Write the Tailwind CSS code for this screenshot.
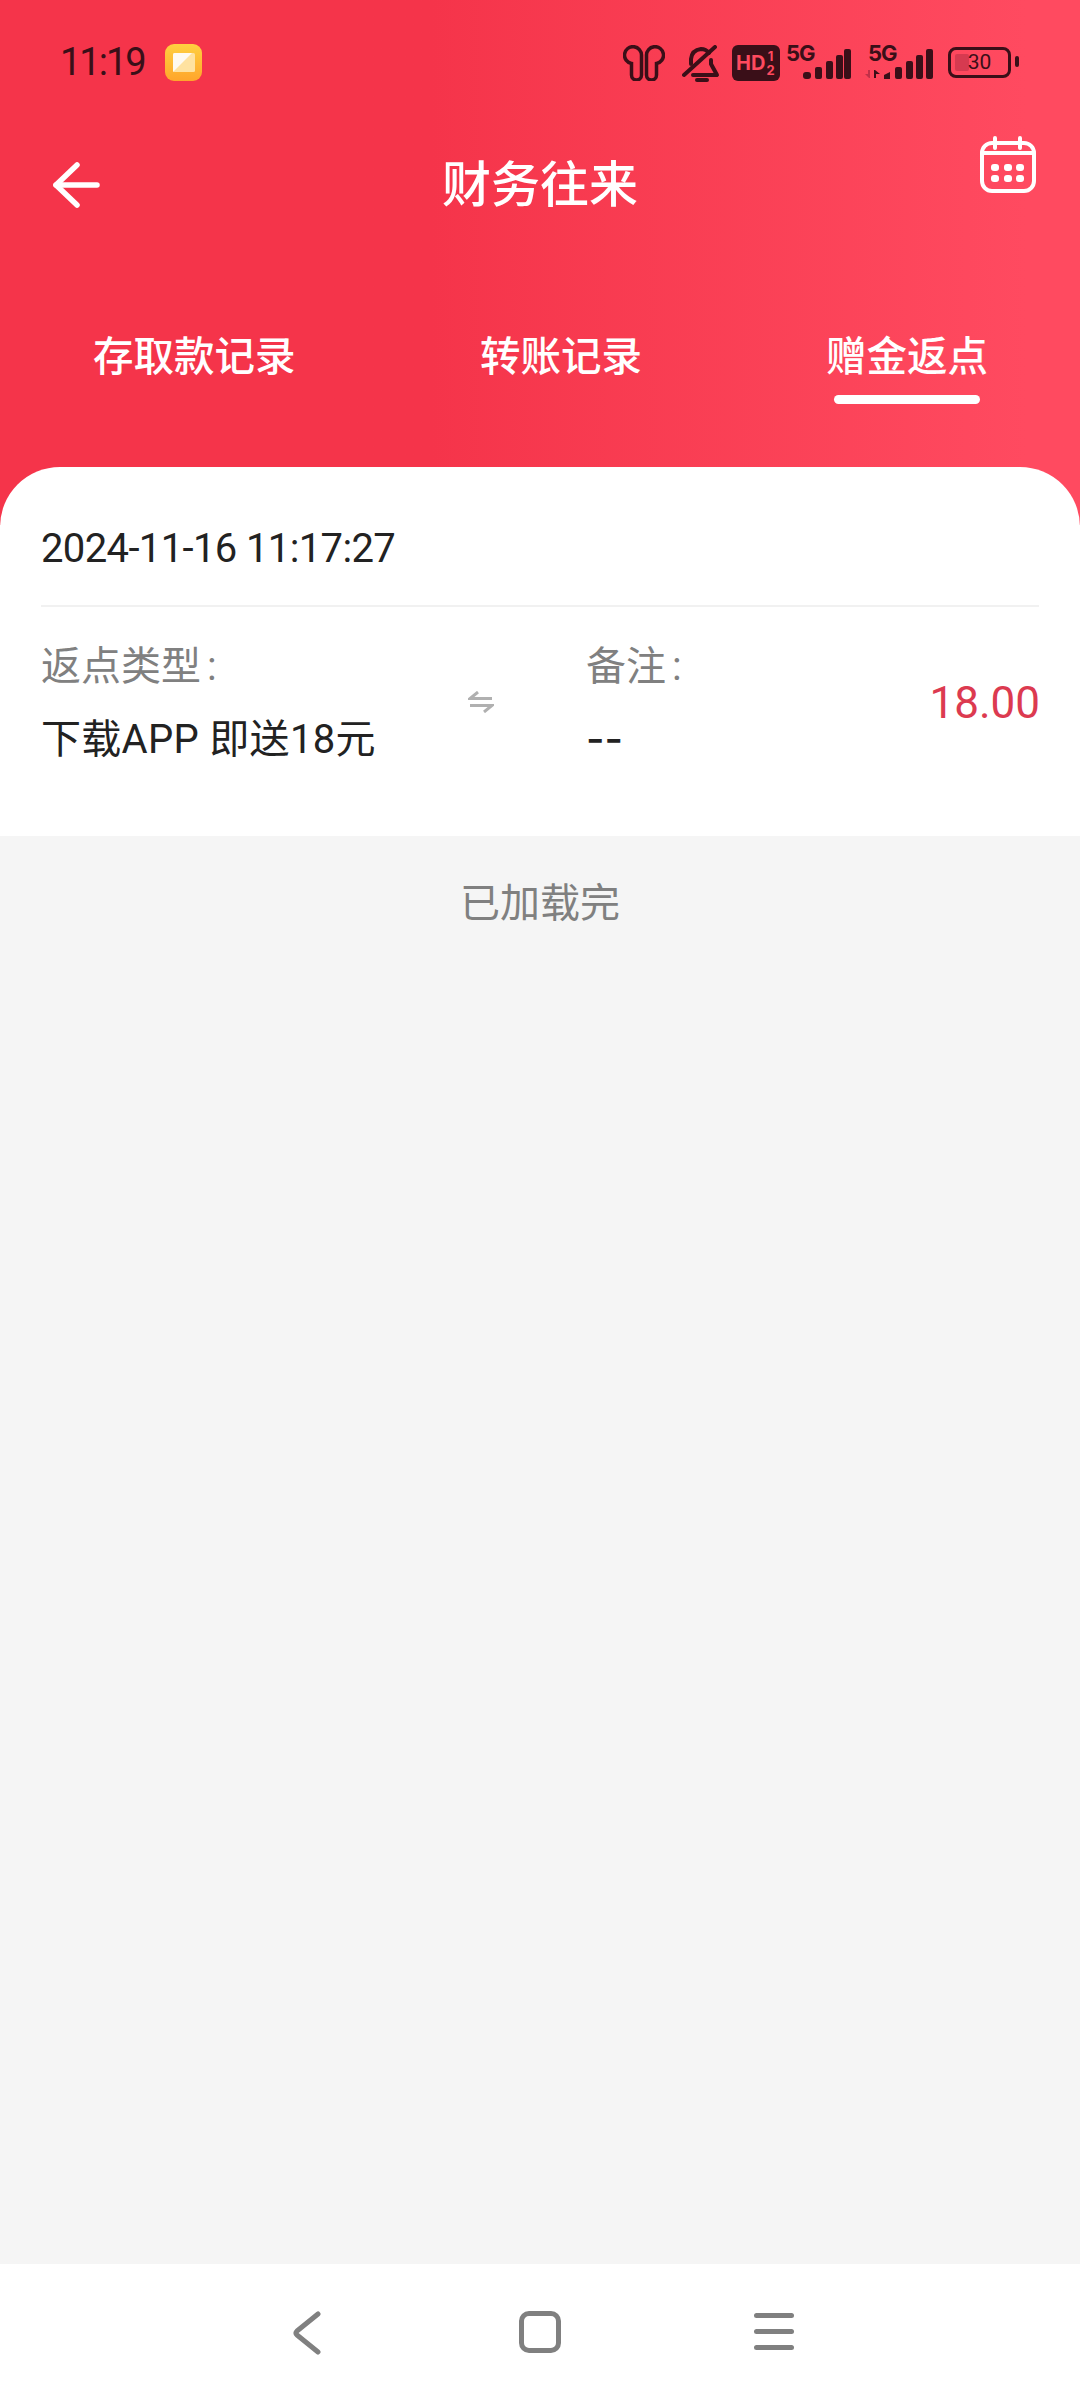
<!DOCTYPE html>
<html lang="zh-CN">
<head>
    <meta charset="UTF-8">
    <title>财务往来</title>
    <script src="https://cdn.jsdelivr.net/npm/@tailwindcss/browser@4"></script>
</head>
<body class="bg-[#f5f5f5] font-['Roboto','Noto_Sans_CJK_SC',sans-serif]">
<div class="w-[1080px] h-[2400px] flex flex-col overflow-hidden">

    <!-- 头部 -->
    <div class="h-[525px] shrink-0 bg-linear-to-r from-[#f5344a] from-40% to-[#ff4a60] to-95%">
        <!-- 状态栏 -->
        <div class="h-[124px] flex items-start text-[#3a0f18]">
            <span class="w-[105px] ml-[60px] mt-[39px] text-[38px] leading-[46px] tracking-[-2px]">11:19</span>
            <svg class="mt-[44px]" width="37" height="37" viewBox="0 0 37 37">
                <defs><linearGradient id="app" x1="0" y1="0" x2="0" y2="1"><stop offset="0" stop-color="#ffd040"/><stop offset="1" stop-color="#ffa52b"/></linearGradient></defs>
                <rect width="37" height="37" rx="9" fill="url(#app)"/>
                <rect x="8" y="9" width="22" height="19" rx="1.500" fill="#ffe2a0"/>
                <path d="M8 28V10.500Q8 9 9.500 9H27L8 28Z" fill="#fffaf0"/>
            </svg>
            <div class="ml-auto flex items-start mt-[45px]">
                <!-- 耳机 -->
                <svg width="42" height="36" viewBox="0 0 42 36" fill="none" stroke="#3a0f18" stroke-width="3.500">
                    <path d="M18.500 30V10.500A8.500 8.500 0 1 0 8.500 18.500V30A5 5 0 0 0 18.500 30Z"/>
                    <path d="M23.500 30V10.500A8.500 8.500 0 1 1 33.500 18.500V30A5 5 0 0 1 23.500 30Z"/>
                </svg>
                <!-- 静音铃 -->
                <svg class="ml-[17px]" width="38" height="38" viewBox="0 0 38 38" fill="none" stroke="#3a0f18" stroke-width="4" stroke-linecap="round" stroke-linejoin="round">
                    <path d="M2 30L33 2"/>
                    <path d="M9 19V14Q10 5 19 4Q24 4 27 8"/>
                    <path d="M29 15V19L35 30H11"/>
                    <path d="M15 35H25"/>
                </svg>
                <!-- HD -->
                <div class="ml-[12px] w-[48px] h-[36px] rounded-[6px] bg-[#3a0f18] text-[#ff4a5e] flex items-center pl-[4px] font-['Inter',sans-serif] font-bold">
                    <span class="text-[20px] leading-none">HD</span>
                    <span class="ml-[1px] flex flex-col items-center text-[13px] leading-[14px]"><span>1</span><span>2</span></span>
                </div>
                <!-- 信号 1 -->
                <div class="relative ml-[6px] w-[65px] h-[36px]">
                    <span class="absolute left-0 top-[-1px] text-[22px] leading-[19px] font-bold font-['Inter',sans-serif] tracking-[-1px]">5G</span>
                    <svg class="absolute left-[17px] top-[3px]" width="48" height="32" viewBox="0 0 48 32" fill="#3a0f18">
                        <rect x="0" y="24" width="8" height="7" rx="3"/>
                        <rect x="12" y="19" width="7" height="12" rx="2"/>
                        <rect x="23" y="13" width="7" height="18" rx="2"/>
                        <rect x="33" y="7" width="7" height="24" rx="2"/>
                        <rect x="41" y="1" width="7" height="30" rx="2"/>
                    </svg>
                </div>
                <!-- 信号 2 -->
                <div class="relative ml-[14px] w-[68px] h-[36px]">
                    <span class="absolute left-[3px] top-[-1px] text-[22px] leading-[19px] font-bold font-['Inter',sans-serif] tracking-[-1px]">5G</span>
                    <svg class="absolute left-0 top-[25px]" width="16" height="9" viewBox="0 0 16 9">
                        <path d="M0 4H3V0H5V8H4Z" fill="#c23048"/>
                        <path d="M9 0H10L15 4H11V8H9Z" fill="#3a0f18"/>
                    </svg>
                    <svg class="absolute left-[19px] top-[3px]" width="49" height="32" viewBox="0 0 49 32" fill="#3a0f18">
                        <path d="M0 31V27L6 24V31Z"/>
                        <rect x="11" y="19" width="7" height="12" rx="2"/>
                        <rect x="22" y="13" width="7" height="18" rx="2"/>
                        <rect x="32" y="7" width="7" height="24" rx="2"/>
                        <rect x="42" y="1" width="7" height="30" rx="2"/>
                    </svg>
                </div>
                <!-- 电池 -->
                <div class="ml-[15px] mt-[2px] relative w-[63px] h-[31px] rounded-[8px] border-[3px] border-[#3a0f18] flex items-center justify-center">
                    <span class="absolute left-[4px] top-[4px] bottom-[4px] w-[14px] rounded-[2px] bg-[#d63a50]"></span>
                    <span class="relative text-[21px] leading-none font-normal">30</span>
                </div>
                <span class="ml-[4px] mr-[61px] mt-[11px] w-[4px] h-[11px] rounded-full bg-[#3a0f18]"></span>
            </div>
        </div>

        <!-- 标题 -->
        <div class="relative h-[124px] flex items-center justify-center">
            <svg class="absolute left-[52px] top-[37px]" width="48" height="48" viewBox="0 0 48 48" fill="none" stroke="#fff" stroke-width="5.500" stroke-linecap="round" stroke-linejoin="round">
                <path d="M45 24H4"/>
                <path d="M25 4L4 24L25 44"/>
            </svg>
            <h1 class="text-[49px] leading-none font-medium text-white -mt-[1px]">财务往来</h1>
            <svg class="absolute left-[979px] top-[12px]" width="58" height="58" viewBox="0 0 58 58" fill="none">
                <rect x="3" y="7" width="52" height="48" rx="10" stroke="#fff" stroke-width="4"/>
                <path d="M3 17H55" stroke="#fff" stroke-width="4"/>
                <path d="M16 2V12M41 2V12" stroke="#fff" stroke-width="4" stroke-linecap="round"/>
                <g fill="#fff">
                    <rect x="12" y="28" width="8" height="7" rx="3"/><rect x="25" y="28" width="8" height="7" rx="3"/><rect x="37" y="28" width="8" height="7" rx="3"/>
                    <rect x="12" y="39" width="8" height="7" rx="3"/><rect x="25" y="39" width="8" height="7" rx="3"/><rect x="37" y="39" width="8" height="7" rx="3"/>
                </g>
            </svg>
        </div>

        <!-- 标签 -->
        <div class="relative mt-[85px] h-[48px] text-[40.500px] leading-[48px] text-white font-medium flex">
            <span class="ml-[93px]">存取款记录</span>
            <span class="ml-[184.500px]">转账记录</span>
            <span class="ml-[184px] relative">赠金返点
                <span class="absolute left-[8px] top-[62px] w-[146px] h-[9px] rounded-full bg-white"></span>
            </span>
        </div>
    </div>

    <!-- 记录卡片 -->
    <div class="-mt-[58px] h-[369px] shrink-0 bg-white rounded-t-[60px] px-[41px] flex flex-col">
        <div class="h-[140px] shrink-0 border-b-2 border-[#f1f1f1] pt-[57px] text-[40px] leading-[50px] tracking-[-0.63px] text-[#222]">2024-11-16 11:17:27</div>
        <div class="relative flex-1 text-[40px] leading-[48px]">
            <div class="absolute left-0 top-[36px]">
                <p class="text-[#808080]">返点类型<span class="ml-[6px]">:</span></p>
                <p class="mt-[25px] text-[#222] tracking-[0.3px]">下载APP 即送18元</p>
            </div>
            <svg class="absolute left-[427px] top-[84px]" width="26" height="22" viewBox="0 0 26 22" fill="none" stroke="#b0b0b0" stroke-width="3">
                <path d="M10 1L2 7.500H24"/>
                <path d="M16 21L24 14.500H2"/>
            </svg>
            <div class="absolute left-[545px] top-[36px]">
                <p class="text-[#808080]">备注<span class="ml-[6px]">:</span></p>
                <p class="mt-[24px] text-[#222] font-['Inter',sans-serif] font-medium">--</p>
            </div>
            <span class="absolute right-[-1px] top-[70px] text-[44px] leading-[52px] text-[#dc3a50]">18.00</span>
        </div>
    </div>

    <!-- 列表底部 -->
    <p class="pt-[44px] text-center text-[40px] leading-[48px] text-[#808080]">已加载完</p>

    <!-- 导航栏 -->
    <div class="mt-auto h-[136px] shrink-0 bg-white relative">
        <svg class="absolute left-[292px] top-[46px]" width="30" height="46" viewBox="0 0 30 46" fill="none" stroke="#808080" stroke-width="5" stroke-linecap="round" stroke-linejoin="round">
            <path d="M26 4L5 21Q3 23 5 25L26 42"/>
        </svg>
        <span class="absolute left-[519px] top-[47px] w-[42px] h-[42px] rounded-[10px] border-[5px] border-[#808080]"></span>
        <div class="absolute left-[754px] top-[49px] w-[40px] flex flex-col gap-[11px]">
            <span class="h-[5px] rounded-full bg-[#808080]"></span>
            <span class="h-[5px] rounded-full bg-[#808080]"></span>
            <span class="h-[5px] rounded-full bg-[#808080]"></span>
        </div>
    </div>
</div>
</body>
</html>
